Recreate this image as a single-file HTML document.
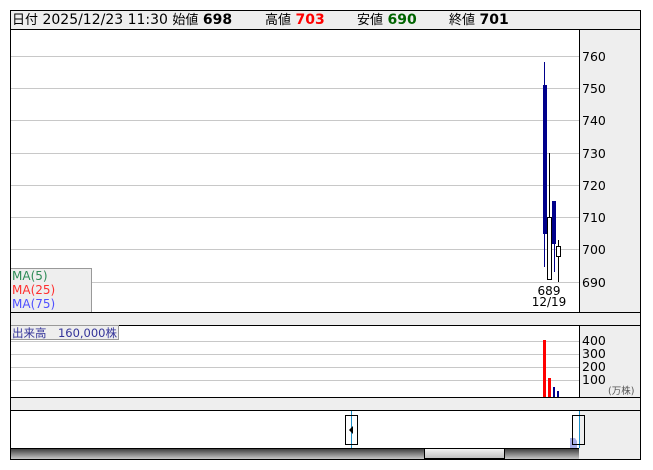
<!DOCTYPE html>
<html><head><meta charset="utf-8"><style>
body{margin:0;width:653px;height:470px;background:#fff;font-family:"DejaVu Sans","Noto Sans CJK JP",sans-serif;position:relative;overflow:hidden}
.a{position:absolute}
</style></head><body>
<svg class="a" style="left:0;top:0" width="653" height="470" xmlns="http://www.w3.org/2000/svg" font-family="DejaVu Sans, Noto Sans CJK JP, sans-serif">
<defs>
<linearGradient id="dk" x1="0" y1="0" x2="0" y2="1"><stop offset="0" stop-color="#333"/><stop offset="1" stop-color="#c8c8c8"/></linearGradient>
<linearGradient id="lt" x1="0" y1="0" x2="0" y2="1"><stop offset="0" stop-color="#f4f4f4"/><stop offset="1" stop-color="#c0c0c0"/></linearGradient>
</defs>
<rect x="10.5" y="10.5" width="630" height="449" fill="#eeeeee" stroke="#000"/>
<rect x="11" y="11" width="629" height="18" fill="#eeeeee"/>
<line x1="10" y1="29.5" x2="640" y2="29.5" stroke="#000"/>
<rect x="11" y="30" width="568" height="282" fill="#fff"/>
<line x1="579.5" y1="29" x2="579.5" y2="312" stroke="#000"/>
<g stroke="#c8c8c8">
<line x1="11" y1="56.5" x2="579" y2="56.5"/><line x1="11" y1="88.5" x2="579" y2="88.5"/>
<line x1="11" y1="120.5" x2="579" y2="120.5"/><line x1="11" y1="153.5" x2="579" y2="153.5"/>
<line x1="11" y1="185.5" x2="579" y2="185.5"/><line x1="11" y1="217.5" x2="579" y2="217.5"/>
<line x1="11" y1="249.5" x2="579" y2="249.5"/><line x1="11" y1="282.5" x2="579" y2="282.5"/>
</g>
<g font-size="12.5" fill="#000">
<text x="582" y="61">760</text><text x="582" y="93">750</text><text x="582" y="125">740</text>
<text x="582" y="158">730</text><text x="582" y="190">720</text><text x="582" y="222">710</text>
<text x="582" y="254">700</text><text x="582" y="287">690</text>
</g>
<line x1="544.5" y1="62" x2="544.5" y2="267" stroke="#00008b"/>
<rect x="543" y="85" width="4" height="149" fill="#00008b"/>
<line x1="549.5" y1="153" x2="549.5" y2="280" stroke="#000"/>
<rect x="547.5" y="217.5" width="4" height="62" fill="#fff" stroke="#000"/>
<line x1="554.5" y1="201" x2="554.5" y2="272" stroke="#00008b"/>
<rect x="552" y="201" width="4" height="43" fill="#00008b"/>
<line x1="558.5" y1="240" x2="558.5" y2="282" stroke="#000"/>
<rect x="556.5" y="246.5" width="4" height="10" fill="#fff" stroke="#000"/>
<text x="549" y="295" font-size="12" text-anchor="middle">689</text>
<text x="549" y="306" font-size="12" text-anchor="middle">12/19</text>
<rect x="10.5" y="268.5" width="81" height="44" fill="#eeeeee" stroke="#999"/>
<text x="12" y="280" font-size="12" fill="#2e8b57">MA(5)</text>
<text x="12" y="294" font-size="12" fill="#ff3030">MA(25)</text>
<text x="12" y="308" font-size="12" fill="#5050ff">MA(75)</text>
<line x1="10" y1="312.5" x2="640" y2="312.5" stroke="#000"/>
<line x1="10" y1="325.5" x2="640" y2="325.5" stroke="#000"/>
<rect x="11" y="326" width="568" height="71" fill="#fff"/>
<line x1="579.5" y1="325" x2="579.5" y2="397" stroke="#000"/>
<g stroke="#c8c8c8">
<line x1="11" y1="341.5" x2="579" y2="341.5"/><line x1="11" y1="354.5" x2="579" y2="354.5"/>
<line x1="11" y1="367.5" x2="579" y2="367.5"/><line x1="11" y1="380.5" x2="579" y2="380.5"/>
</g>
<g font-size="12.5"><text x="582" y="345">400</text><text x="582" y="358">300</text><text x="582" y="371">200</text><text x="582" y="384">100</text></g>
<text x="608" y="394" font-size="9.5" fill="#555">(万株)</text>
<rect x="543" y="340" width="3" height="57" fill="#f00"/>
<rect x="548" y="378" width="3" height="19" fill="#f00"/>
<rect x="553" y="387" width="2" height="10" fill="#00008b"/>
<rect x="557" y="391" width="2" height="6" fill="#00008b"/>
<rect x="10.5" y="325.5" width="108" height="14" fill="#eeeeee" stroke="#999"/>
<text x="12" y="337" font-size="11.5" fill="#333399" textLength="105">出来高　160,000株</text>
<line x1="10" y1="397.5" x2="640" y2="397.5" stroke="#000"/>
<line x1="10" y1="410.5" x2="640" y2="410.5" stroke="#000"/>
<rect x="11" y="411" width="568" height="37" fill="#fff"/>
<line x1="351.5" y1="411" x2="351.5" y2="448" stroke="#1e90c8"/>
<line x1="579.5" y1="411" x2="579.5" y2="448" stroke="#1e90c8"/>
<path d="M570 438 L575 438 L577 441 L577 448 L570 448Z" fill="#aab0e8"/>
<rect x="345.5" y="415.5" width="12" height="29" fill="none" stroke="#000"/>
<path d="M349 430 L353 426 L353 434Z" fill="#000"/>
<rect x="572.5" y="415.5" width="12" height="29" fill="none" stroke="#000"/>
<rect x="11" y="448" width="568" height="11" fill="url(#dk)"/>
<rect x="424.5" y="448.5" width="80" height="10" fill="url(#lt)" stroke="#000"/>
<line x1="10" y1="448.5" x2="579" y2="448.5" stroke="#000"/>
<rect x="10.5" y="10.5" width="630" height="449" fill="none" stroke="#000"/>
</svg>
<div class="a" style="left:12px;top:11px;font-size:14px;line-height:18px;white-space:nowrap">
<span style="font-size:13px">日付</span> 2025/12/23 11:30 <span style="font-size:13px">始値</span> <b>698</b>
</div>
<div class="a" style="left:265px;top:11px;font-size:14px;line-height:18px"><span style="font-size:13px">高値</span> <b style="color:#f00">703</b></div>
<div class="a" style="left:357px;top:11px;font-size:14px;line-height:18px"><span style="font-size:13px">安値</span> <b style="color:#006400">690</b></div>
<div class="a" style="left:449px;top:11px;font-size:14px;line-height:18px"><span style="font-size:13px">終値</span> <b>701</b></div>
</body></html>
